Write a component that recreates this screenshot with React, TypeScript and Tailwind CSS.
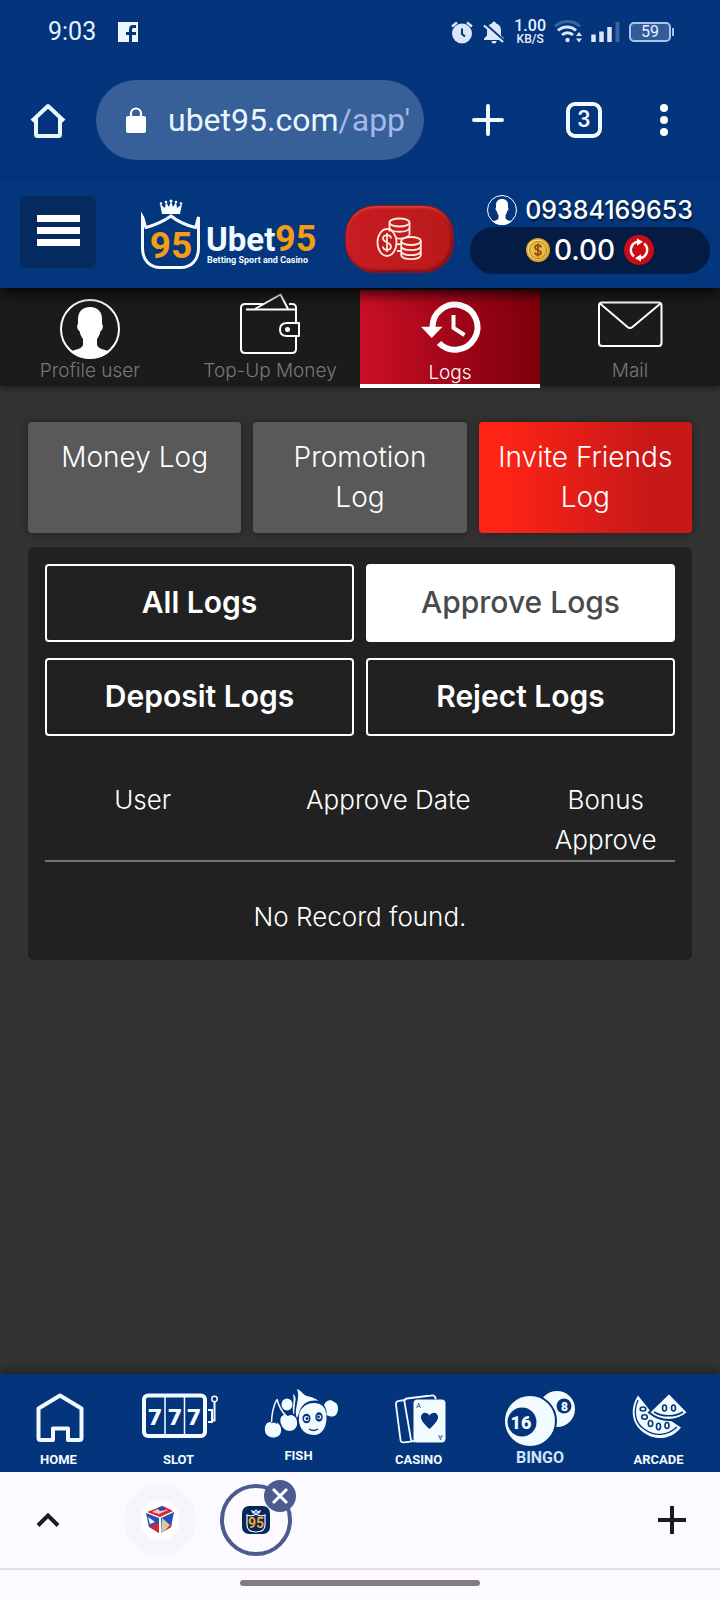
import React from "react";

const PersonIcon: React.FC<{ className?: string }> = ({ className }) => (
  <svg viewBox="0 0 60 60" className={className} aria-hidden="true">
    <circle cx="30" cy="30" r="29" fill="none" stroke="#fff" strokeWidth="2" />
    <path
      d="M30 8c-8 0-12 5-12 12v5c-1.500 1-1 6 1.500 7 .8 4 2 6 3.500 8v6c-1 5-9 5.500-12.500 6.500C15 57 22 60 30 60s15-3 19.500-7.500C46 51.500 38 51 37 46v-6c1.500-2 2.700-4 3.500-8 2.500-1 3-6 1.500-7v-5c0-7-4-12-12-12Z"
      fill="#fff"
    />
  </svg>
);

const StatusBar: React.FC = () => (
  <div className="flex h-16 items-center justify-between pl-12 pr-[46px] text-[#e6f2ff]">
    <div className="flex items-center gap-[22px]">
      <span className="text-[25px] leading-8">9:03</span>
      <svg viewBox="0 0 20 20" className="size-5" aria-hidden="true">
        <path d="M0 0h20v20h-6v-7h4v-3h-4V8c0-1.500.5-2 2-2h2V3h-3c-3 0-4 2-4 4.500V10H8v3h3v7H0Z" fill="#eef7ff" />
      </svg>
    </div>
    <div className="flex items-center gap-2">
      <svg viewBox="0 0 24 24" className="size-6" aria-hidden="true">
        <circle cx="12" cy="13.500" r="10" fill="#dbe6f8" />
        <path d="M2 6.500 7 2.500M22 6.500l-5-4" stroke="#dbe6f8" strokeWidth="2.400" />
        <path d="M12 8.500v5.500l3 2.500" fill="none" stroke="#04347c" strokeWidth="2" />
      </svg>
      <svg viewBox="0 0 24 24" className="size-6" aria-hidden="true">
        <path d="M12 1.500c1 0 1.800.8 1.800 1.800 3.200.8 5.200 3.400 5.200 6.900v5.300l3 3V20H2v-1.500l3-3v-5.300c0-3.500 2-6.100 5.200-6.900 0-1 .8-1.800 1.800-1.800ZM9.500 21h5a2.500 2.500 0 0 1-5 0Z" fill="#dbe6f8" />
        <path d="m3 3.500 20 18" stroke="#04347c" strokeWidth="2.200" />
        <path d="M2 5.500 21 22" stroke="#dbe6f8" strokeWidth="2.200" />
      </svg>
      <div className="flex flex-col items-center text-center font-medium">
        <span className="text-[16px] leading-[14px]">1.00</span>
        <span className="text-[12px] leading-3">KB/S</span>
      </div>
      <svg viewBox="0 0 28 24" className="h-6 w-7" aria-hidden="true">
        <path d="M1 6.500a18 18 0 0 1 25 0" fill="none" stroke="#3c639f" strokeWidth="3" />
        <path d="M4 10.500a13 13 0 0 1 18 0M8 15a8 8 0 0 1 11 0" fill="none" stroke="#dbe6f8" strokeWidth="3" />
        <circle cx="13.500" cy="20" r="2.200" fill="#dbe6f8" />
        <path d="m22 16 3-4 3 4ZM22 18.500l3 4 3-4Z" fill="#dbe6f8" />
      </svg>
      <svg viewBox="0 0 30 22" className="h-[22px] w-[30px]" aria-hidden="true">
        <path d="M3.500 13.500V21M11.500 10.500V21M19.500 6V21" stroke="#dbe6f8" strokeWidth="4.500" />
        <path d="M27.500 1v20" stroke="#3c639f" strokeWidth="4" />
      </svg>
      <div className="flex items-center pl-px">
        <span className="flex h-5 w-[42px] items-center justify-center rounded-[5px] border-2 border-[#a9c4ea] bg-[#325c98] text-[16px] leading-4">59</span>
        <span className="ml-px h-2 w-[2px] bg-[#a9c4ea]" />
      </div>
    </div>
  </div>
);

const BrowserBar: React.FC = () => (
  <div className="flex h-28 items-center pl-[30px] pr-[52px]">
    <button aria-label="Home page" className="size-9 shrink-0">
      <svg viewBox="0 0 36 36" className="size-9">
        <path d="M2 19 18 4l16 15M6 16v16.500q0 1.500 1.500 1.500h21q1.500 0 1.500-1.500V16" fill="none" stroke="#eaf8ff" strokeWidth="4" strokeLinejoin="round" />
      </svg>
    </button>
    <button className="ml-[30px] flex h-20 min-w-0 flex-1 items-center gap-[22px] rounded-full bg-[#375f98] pl-[30px] pr-2">
      <svg viewBox="0 0 20 26" className="h-[26px] w-5 shrink-0" aria-hidden="true">
        <rect y="9" width="20" height="17" rx="2" fill="#fff" />
        <path d="M5 10V6.500a5 5 0 0 1 10 0V10" fill="none" stroke="#fff" strokeWidth="2.200" />
      </svg>
      <span className="min-w-0 flex-1 whitespace-nowrap text-left text-[32px] leading-10 text-[#e9f7ff]">
        ubet95.com<span className="text-[#a3b8ea]">/app'</span>
      </span>
    </button>
    <button aria-label="New tab" className="ml-12 size-8 shrink-0">
      <svg viewBox="0 0 32 32" className="size-8">
        <path d="M16 2v28M2 16h28" stroke="#f2fbff" strokeWidth="4" strokeLinecap="round" />
      </svg>
    </button>
    <button aria-label="Open tabs" className="ml-[62px] flex size-9 shrink-0 items-center justify-center rounded-[9px] border-4 border-[#f2fbff] text-[23px] font-medium leading-7 text-[#f2fbff]">
      3
    </button>
    <button aria-label="More" className="ml-[58px] w-2 shrink-0">
      <svg viewBox="0 0 8 32" className="h-8 w-2">
        <circle cx="4" cy="4" r="4" fill="#fff" />
        <circle cx="4" cy="16" r="4" fill="#fff" />
        <circle cx="4" cy="28" r="4" fill="#fff" />
      </svg>
    </button>
  </div>
);

const Logo: React.FC = () => (
  <svg viewBox="0 0 178 72" className="h-[72px] w-[178px] shrink-0" role="img" aria-label="Ubet95 Betting Sport and Casino">
    <path d="m22 15-2-10 5 4 1-6 3 5 2-6 2 6 3-5 1 6 5-4-2 10Z" fill="#f2fbff" />
    <g fill="#f2fbff">
      <circle cx="21" cy="4.500" r="1.300" />
      <circle cx="26" cy="3" r="1.300" />
      <circle cx="31" cy="2" r="1.500" />
      <circle cx="36" cy="3" r="1.300" />
      <circle cx="41" cy="4.500" r="1.300" />
    </g>
    <path
      d="M2.500 18v31c0 12 7 19.500 18 19.500h20c11 0 18-7.500 18-19.500V18c-1 2.500-1.500 7.500-3 10.500C45 26 37 22 31 17 24 22 15 26 6 28.500c-1.500-2-2-8-3.500-10.500Z"
      fill="none"
      stroke="#f2fbff"
      strokeWidth="3"
    />
    <g className="font-['Roboto',sans-serif] font-bold">
      <text x="31" y="59" textAnchor="middle" fontSize="37" fill="#f49c14">95</text>
      <text x="66" y="52" fontSize="33" fill="#f2fbff">Ubet</text>
      <text x="135" y="52" fontSize="36" fill="#f49c14">95</text>
      <text x="67" y="64" fontSize="9" fill="#f2fbff">Betting Sport and Casino</text>
    </g>
  </svg>
);

const CoinsIcon: React.FC = () => (
  <svg viewBox="0 0 46 44" className="h-11 w-[46px]" fill="none" stroke="#ffe9dc" strokeWidth="1.800" aria-hidden="true">
    <ellipse cx="23.500" cy="5.500" rx="10" ry="4" />
    <path d="M13.500 5.500v9M33.500 5.500V18M13.500 11c2 5 18 5 20 0M20 21c4 1 10 .5 13.500-2.500M21 27c1.500.5 3 .2 4 0M21 34h4" />
    <ellipse cx="11" cy="25.500" rx="9.500" ry="13.500" />
    <path d="M15 21.500c0-5-8-4-8 0s8 3.500 8 8-8 4.500-8 0M11 16v19" />
    <ellipse cx="35" cy="24" rx="9.800" ry="4" fill="#c01d1d" />
    <path d="M25.200 24v14c0 5.500 19.600 5.500 19.600 0V24M25.200 29c0 5.500 19.600 5.500 19.600 0M25.200 34c0 5.500 19.600 5.500 19.600 0" />
  </svg>
);

const SiteHeader: React.FC = () => (
  <header className="relative z-20 flex h-[108px] items-start bg-[#04367e] pl-5 pr-[10px] pt-[15px] shadow-[0_8px_12px_-2px_rgba(0,0,0,0.8)]">
    <button aria-label="Menu" className="mt-px flex h-[72px] w-[76px] shrink-0 flex-col items-center justify-center gap-[5px] rounded-md bg-[#042a60] pb-1">
      <span className="h-[7px] w-[43px] bg-white" />
      <span className="h-[7px] w-[43px] bg-white" />
      <span className="h-[7px] w-[43px] bg-white" />
    </button>
    <a href="#" className="ml-11 mt-1 flex">
      <Logo />
    </a>
    <div className="flex flex-1 justify-center pl-[10px]">
      <button
        aria-label="Wallet"
        className="mt-[10px] flex h-[68px] w-[109px] items-center justify-center rounded-[30px] border border-[#8f1220] bg-gradient-to-r from-[#c81c22] to-[#b91a1a] shadow-[inset_-2px_-2px_3px_#7d1018,inset_0_2px_2px_#e04038]"
      >
        <CoinsIcon />
      </button>
    </div>
    <div className="flex w-60 shrink-0 flex-col">
      <div className="mb-[2px] flex h-[30px] items-center justify-end gap-2 pr-[17px]">
        <PersonIcon className="size-[30px]" />
        <span className="font-['Inter',sans-serif] text-[25px] font-medium leading-[30px] text-white [text-shadow:1px_2px_2px_rgba(0,0,0,0.6)]">09384169653</span>
      </div>
      <div className="flex h-[47px] items-center justify-center gap-1 rounded-full bg-[#041c44] pb-[2px]">
        <svg viewBox="0 0 24 24" className="size-6" aria-hidden="true">
          <circle cx="12" cy="12" r="12" fill="#dba632" />
          <circle cx="11.500" cy="11.500" r="10" fill="#f8dc6c" />
          <circle cx="12" cy="12" r="8.500" fill="#e9bd48" stroke="#b87a1c" strokeWidth="1" />
          <path d="M15 9.500c-.5-3.500-6-3-6 0s6 2 6 5-5.500 3.500-6 0M12 5.500v13" fill="none" stroke="#90500e" strokeWidth="1.800" />
        </svg>
        <span className="font-['Inter',sans-serif] text-[28px] font-medium leading-8 text-white">0.00</span>
        <button aria-label="Refresh balance" className="ml-[5px] flex size-[30px] items-center justify-center rounded-full bg-[#cc0c14]">
          <svg viewBox="0 0 30 30" className="size-[30px]" fill="none" stroke="#fff" strokeWidth="2.400">
            <path d="M10 21.500A8.300 8.300 0 0 1 14 6.800M20 8.500a8.300 8.300 0 0 1-4 14.700" />
            <path d="m13 3.500 6 3.300-6 4ZM17 19.200l-6 4 6 3.300Z" fill="#fff" stroke="none" />
          </svg>
        </button>
      </div>
    </div>
  </header>
);

const tabs = [
  {
    label: "Profile user",
    icon: (
      <>
        <circle cx="90" cy="41" r="29" fill="none" stroke="#fff" strokeWidth="2" />
        <path
          d="M90 19c-8 0-12 5-12 12v5c-1.500 1-1 6 1.500 7 .8 4 2 6 3.500 8v6c-1 4-9 5-13 6.500C75 68 82 70.500 90 70.500s15-2.500 20-7c-4-1.500-12-2.500-13-6.500v-6c1.500-2 2.700-4 3.500-8 2.500-1 3-6 1.500-7v-5c0-7-4-12-12-12Z"
          fill="#fff"
        />
      </>
    ),
  },
  {
    label: "Top-Up Money",
    icon: (
      <g fill="none" stroke="#fff" strokeWidth="2" strokeLinejoin="round">
        <path d="M83 16H65q-4 0-4 4v41q0 4 4 4h47q4 0 4-4V48M116 35V20q0-4-4-4h-3M66 21.500h50" />
        <path d="m75 21 25.500-14.500L108 21" />
        <path d="M119 35h-12q-7 0-7 6.500t7 6.500h12Z" />
        <circle cx="107.500" cy="41.500" r="1.500" fill="#fff" />
      </g>
    ),
  },
  {
    label: "Logs",
    active: true,
    icon: (
      <g fill="none" stroke="#fff">
        <path d="M72.500 37a22.500 22.500 0 1 1 6.500 16" strokeWidth="6" />
        <path d="M61 36.700h21.500L71.700 48Z" fill="#fff" stroke="none" />
        <path d="M93.500 25v13l11 7" strokeWidth="4" />
      </g>
    ),
  },
  {
    label: "Mail",
    icon: (
      <g fill="none" stroke="#fff" strokeWidth="2" strokeLinejoin="round">
        <rect x="59" y="14.500" width="62.500" height="43.500" rx="3" />
        <path d="m60 15.500 27.500 23.500q2.500 2 5 0l28-23.500" />
      </g>
    ),
  },
];

const logTypes = ["Money Log", "Promotion Log", "Invite Friends Log"];
const filters = ["All Logs", "Approve Logs", "Deposit Logs", "Reject Logs"];

const LogsPage: React.FC = () => (
  <main className="flex flex-1 flex-col gap-[14px] bg-[#323232] px-7 pt-9 font-['Inter','Noto_Sans',sans-serif] font-light text-white">
    <div className="grid grid-cols-3 gap-3">
      {logTypes.map((name) => (
        <button
          key={name}
          className={
            "flex items-start justify-center rounded px-4 pb-4 pt-[15px] text-[28px] leading-10 shadow-[0_0_10px_rgba(0,0,0,0.35)] " +
            (name === "Invite Friends Log" ? "bg-gradient-to-r from-[#ff2415] from-10% to-[#c81818] to-80%" : "bg-[#595959]")
          }
        >
          {name}
        </button>
      ))}
    </div>

    <section className="rounded-md bg-[#212121] p-[17px] pb-[23px]">
      <div className="grid grid-cols-2 gap-x-3 gap-y-4">
        {filters.map((name) => (
          <button
            key={name}
            className={
              "h-[78px] rounded border-2 border-white pb-[2px] text-[30px] leading-10 " +
              (name === "Approve Logs" ? "bg-white font-medium text-[#4a4a4a]" : "font-semibold")
            }
          >
            {name}
          </button>
        ))}
      </div>

      <table className="mt-11 w-full table-fixed text-center text-[26px] leading-10">
        <thead>
          <tr className="border-b-2 border-[#757575] align-top">
            <th className="w-[31%] font-light">User</th>
            <th className="w-[47%] font-light">Approve Date</th>
            <th className="w-[22%] font-light">Bonus Approve</th>
          </tr>
        </thead>
        <tbody>
          <tr>
            <td colSpan={3} className="pt-[35px]">No Record found.</td>
          </tr>
        </tbody>
      </table>
    </section>
  </main>
);

const games = [
  {
    label: "HOME",
    icon: <path d="m60 21.500 21.500 13V64q0 2-2 2H68V54.500H53V66H40.500q-2 0-2-2V34.500Z" fill="none" stroke="#f2fbff" strokeWidth="4" strokeLinejoin="round" />,
  },
  {
    label: "SLOT",
    icon: (
      <g fill="none" stroke="#f2fbff">
        <rect x="24" y="21.500" width="61" height="40.500" rx="4" strokeWidth="4" />
        <path d="M45 21v41M64.500 21v41" strokeWidth="1.500" />
        <path d="M88 36h4v12h-4M94.500 28v18.500H92" strokeWidth="2" />
        <circle cx="94.500" cy="25" r="2.700" strokeWidth="1.500" />
        <g fill="#f2fbff" stroke="none" fontSize="22" textAnchor="middle" className="font-['DejaVu_Sans',sans-serif] font-bold">
          <text x="35" y="51">7</text>
          <text x="55" y="51">7</text>
          <text x="74" y="51">7</text>
        </g>
      </g>
    ),
  },
  {
    label: "FISH",
    small: true,
    icon: (
      <g fill="#f2fbff">
        <path d="M36.500 26c-4 8-5 16-5 24M37 25c2 9 5 13 10 18" fill="none" stroke="#f2fbff" strokeWidth="1.500" />
        <path d="M33 49c-5-3-9 2-8 8 1 8 14 9 16 1 1-6-3-11-8-9ZM48 42c-6-3-9 2-7 8 3 9 14 9 16 1 1-7-4-12-9-9Z" />
        <ellipse cx="47" cy="30.500" rx="5.500" ry="6" />
        <path d="M53 20c3 2 3 5 2 9l-1 12c-3-6 1-13-1-21Z" />
        <path d="M57 15c5 2 6 6 10 7 6 1 9 3 12 5-10-2-18 3-20 12l-2 5c-2-4-1-9 0-14s2-10 0-15Z" />
        <path d="M62.500 34c5-6.500 17-6.500 21.500-.5 5 8 3 27-9.500 27.500-12 0-16.500-9-15.500-19 .3-4 1.500-6 3.500-8Z" />
        <path d="M84 31c2-5 7-6 10-3 5 1 5 9 2 13-4 3-7 1-9.500 0 .5-4-.5-7-2.500-10Z" />
        <g fill="#04347c">
          <ellipse cx="66.500" cy="44.500" rx="4" ry="4.800" />
          <ellipse cx="79" cy="43" rx="3.700" ry="4.700" />
        </g>
        <circle cx="66.500" cy="44.500" r="2.600" />
        <circle cx="79" cy="43" r="2.300" />
        <g fill="#04347c">
          <circle cx="67" cy="44.500" r="1.500" />
          <circle cx="78.500" cy="43" r="1.400" />
        </g>
        <path d="M69 55c3 2 6 2 9 0" fill="none" stroke="#04347c" strokeWidth="1.400" />
        <path d="M47 41c3-2 5-2 7 1M31 49c2-2 4-1 6 1" fill="none" stroke="#04347c" strokeWidth="1" />
      </g>
    ),
  },
  {
    label: "CASINO",
    icon: (
      <g fill="none" stroke="#f2fbff" strokeWidth="1.800">
        <path d="m45 26-6 .8q-3.500.5-3 4l4.500 35q.5 3 3.500 2.500l8.500-1" />
        <path d="m76 25-1-2q-1-2-4-1.500l-24 3q-3 .5-2.500 3.500l6.500 38 4 2" />
        <rect x="53.500" y="25.500" width="32" height="43" rx="4" fill="#f2fbff" stroke="none" />
        <path d="M69.500 55C63 49 61 46 61 43c0-5 6-6 8.500-1.500C72 37 78 38 78 43c0 3-2 6-8.500 12Z" fill="#04347c" stroke="none" />
        <g fill="#04347c" stroke="none" fontSize="7" textAnchor="middle" className="font-['Roboto',sans-serif]">
          <text x="58.500" y="34">A</text>
          <text x="-80.500" y="-61" transform="rotate(180)">A</text>
        </g>
      </g>
    ),
  },
  {
    label: "BINGO",
    large: true,
    icon: (
      <g className="font-['Roboto',sans-serif] font-black">
        <circle cx="77" cy="35" r="18" fill="#f2fbff" />
        <circle cx="84" cy="32" r="7.500" fill="#04347c" />
        <text x="84.500" y="37" textAnchor="middle" fontSize="12" fill="#f2fbff">8</text>
        <circle cx="50" cy="47" r="26" fill="#f2fbff" stroke="#04347c" strokeWidth="2" />
        <circle cx="42" cy="48" r="14.500" fill="#04347c" />
        <text x="41" y="54.500" textAnchor="middle" fontSize="18" fill="#f2fbff">16</text>
      </g>
    ),
  },
  {
    label: "ARCADE",
    icon: (
      <g fill="#f2fbff">
        <path d="M38 21.500c-8 12-7 26 3 35 12 11 30 10 40-3l-9-6-13-4-9-7Z" />
        <path d="M38 26c-5 12-3 23 6 29 11 8 23 7 33-2" fill="none" stroke="#04347c" strokeWidth="1.300" />
        <path d="M69 19 88 38.500c-12 10-27 10-39 0Z" stroke="#04347c" strokeWidth="1.800" />
        <path d="M54 38c8 5 21 5 29 0" fill="none" stroke="#04347c" strokeWidth="1.500" />
        <g fill="#f2fbff" stroke="#04347c" strokeWidth="1.600">
          <ellipse cx="43" cy="35" rx="2.800" ry="2" />
          <ellipse cx="44.500" cy="43" rx="2.800" ry="2.200" />
          <ellipse cx="50.500" cy="49.500" rx="2.200" ry="3" />
          <ellipse cx="58.500" cy="52.500" rx="2" ry="3.200" />
          <ellipse cx="67" cy="51.500" rx="2" ry="3" />
          <ellipse cx="64.500" cy="34" rx="2" ry="3" />
          <ellipse cx="73.500" cy="34" rx="2" ry="3" />
        </g>
      </g>
    ),
  },
];

const GameNav: React.FC = () => (
  <nav className="grid h-[98px] grid-cols-6 bg-[#04347c] shadow-[0_-3px_8px_rgba(0,0,0,0.35)]">
    {games.map((game) => (
      <a key={game.label} href="#" className="flex flex-col items-center">
        <svg viewBox="0 0 120 72" className="h-[72px] w-full shrink-0" aria-hidden="true">
          {game.icon}
        </svg>
        <span
          className={
            "font-bold " +
            (game.large ? "text-[16px] leading-6 text-[#cfe4f8]" : game.small ? "pr-[3px] text-[13px] leading-5 text-[#f2fbff]" : "pr-[3px] text-[13px] leading-7 text-[#f2fbff]")
          }
        >
          {game.label}
        </span>
      </a>
    ))}
  </nav>
);

const TabStrip: React.FC = () => (
  <footer className="bg-[#fdfaff]">
    <div className="flex h-[98px] items-center border-b-2 border-[#e2dfe6] pl-9 pr-[34px]">
      <button aria-label="Expand tabs">
        <svg viewBox="0 0 24 16" className="h-4 w-6">
          <path d="m2 13.500 10-10 10 10" fill="none" stroke="#1c1a1e" strokeWidth="4" />
        </svg>
      </button>
      <button aria-label="Tab 1" className="ml-16 flex size-[72px] items-center justify-center rounded-full bg-[#f4f6f9]">
        <svg viewBox="0 0 40 40" className="size-10">
          <circle cx="20" cy="20" r="20" fill="#fff" />
          <path d="m7 12 16-6 10 5-13 6Z" fill="#d9252c" />
          <path d="m12 12 8-4 8 2-9 4Z" fill="#f0c8cc" />
          <path d="m17 8 5-2 4 4-6 1Z" fill="#2b4bb0" />
          <path d="m6 13 13 5v15L9 27Z" fill="#2450b8" />
          <path d="m8 17 7 5-5 2Z" fill="#fff" />
          <path d="m9 26 10-3v10Z" fill="#d9252c" />
          <path d="m21 18 13-6-3 15-10 6Z" fill="#2450b8" />
          <path d="m22 18 9 8-10 7Z" fill="#d4cba4" />
          <path d="m29 26 3-3-1 4-6 4Z" fill="#d9252c" />
        </svg>
      </button>
      <div className="relative ml-6">
        <button aria-label="Ubet95 tab" className="flex size-[72px] items-center justify-center rounded-full border-4 border-[#4a5b90]">
          <svg viewBox="0 0 28 28" className="size-7">
            <rect width="28" height="28" rx="7" fill="#06265c" />
            <path d="M5 9v10q0 7 9 7t9-7V9q-5 2-9-1-4 3-9 1ZM10 5l1 2h6l1-2-2 1-2-2-2 2Z" fill="none" stroke="#e8f0ff" strokeWidth="1.200" />
            <text x="14" y="22" textAnchor="middle" fontSize="14" fill="#f4a62a" className="font-['Roboto',sans-serif] font-bold">95</text>
          </svg>
        </button>
        <button aria-label="Close tab" className="absolute -right-1 -top-1 flex size-8 items-center justify-center rounded-full bg-[#4a5b90]">
          <svg viewBox="0 0 16 16" className="size-4">
            <path d="m1 1 14 14M15 1 1 15" stroke="#fff" strokeWidth="3" />
          </svg>
        </button>
      </div>
      <button aria-label="Add tab" className="ml-auto">
        <svg viewBox="0 0 28 28" className="size-7">
          <path d="M14 0v28M0 14h28" stroke="#1c1a1e" strokeWidth="4" />
        </svg>
      </button>
    </div>
    <div className="flex h-[30px] items-center justify-center pb-1">
      <span className="h-[6px] w-1/3 rounded-full bg-[#807c80]" />
    </div>
  </footer>
);

export default function App() {
  return (
    <div className="flex min-h-screen flex-col bg-[#323232] font-['Roboto',sans-serif]">
      <div className="bg-[#04347c] pb-1">
        <StatusBar />
        <BrowserBar />
      </div>
      <SiteHeader />
      <nav className="relative z-10 grid h-[98px] grid-cols-4 bg-[#1b1b1b] font-['Inter',sans-serif] text-[19px] font-light shadow-[0_2px_6px_rgba(0,0,0,0.4)]">
        {tabs.map((tab) => (
          <a
            key={tab.label}
            href="#"
            className={
              "flex h-[98px] flex-col items-center " +
              (tab.active ? "mt-[2px] border-b-4 border-white bg-gradient-to-r from-[#cb1026] to-[#7c000c] text-white" : "text-[#777]")
            }
          >
            <svg viewBox="0 0 180 72" className="h-[72px] w-full shrink-0" aria-hidden="true">
              {tab.icon}
            </svg>
            <span className="leading-[22px]">{tab.label}</span>
          </a>
        ))}
      </nav>
      <LogsPage />
      <GameNav />
      <TabStrip />
    </div>
  );
}
